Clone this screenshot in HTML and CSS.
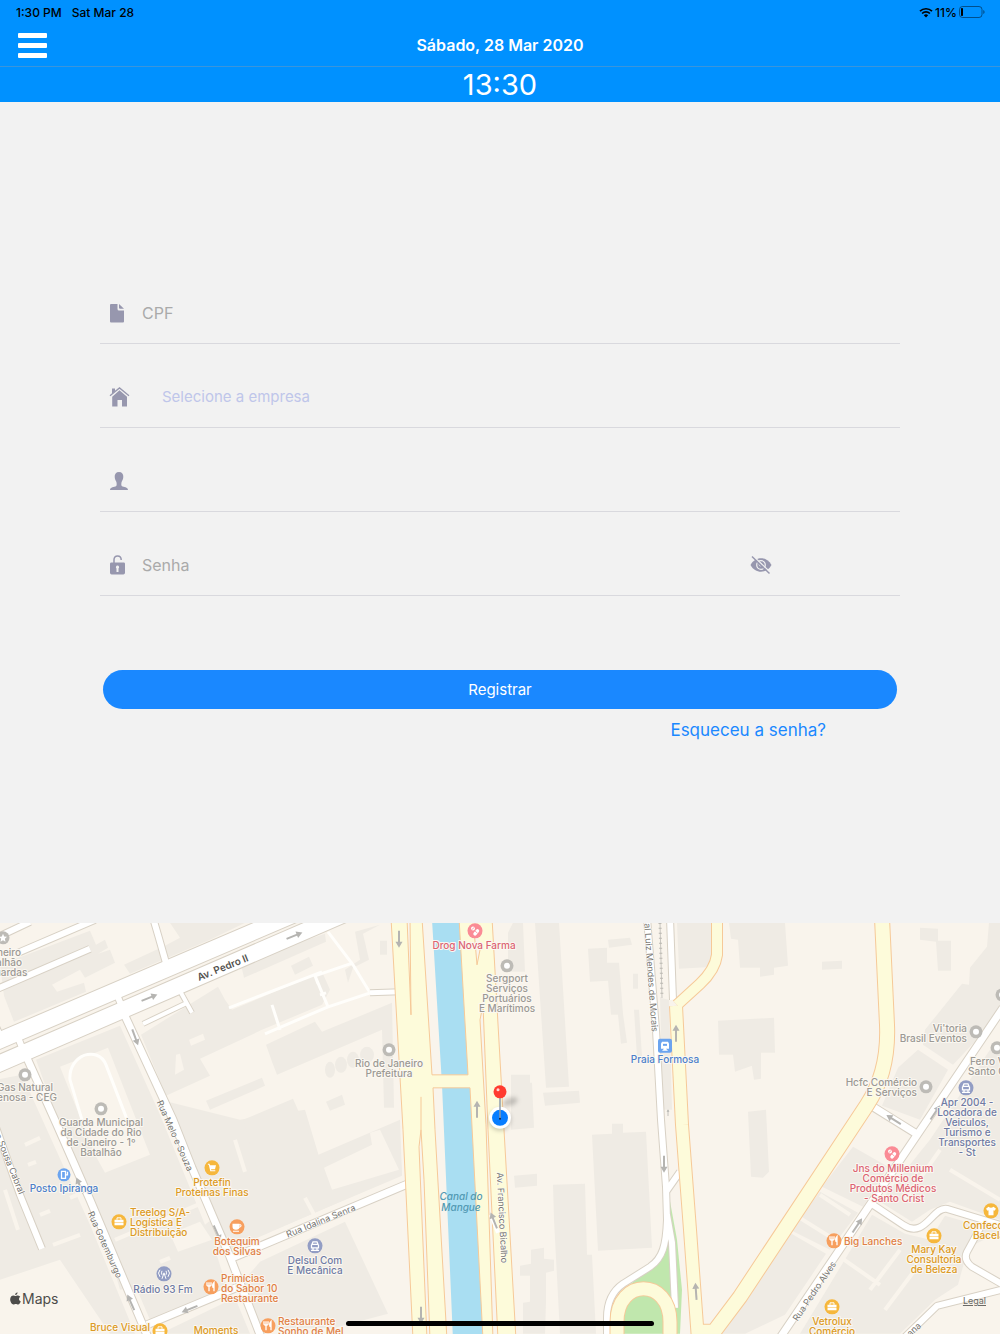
FILE: index.html
```html
<!DOCTYPE html>
<html lang="pt-BR">
  <head>
    <meta charset="UTF-8" />
    <meta name="viewport" content="width=device-width, initial-scale=1.0" />
    <title>Registrar ponto</title>
    <link rel="stylesheet" href="styles.css">
  </head>

  <body>
    <header class="header">
      <div class="status">
        <span>1:30 PM</span>
        <span>Sat Mar 28</span>
        <span class="status-right">
          <svg width="14" height="11" viewBox="0 0 14 11">
            <path d="M1 4.2a8.6 8.6 0 0 1 12 0M3.1 6.5a5.6 5.6 0 0 1 7.8 0" fill="none" stroke="#000" stroke-width="1.7" />
            <path d="M7 10.5 4.8 8.2a3.2 3.2 0 0 1 4.4 0z" />
          </svg>
          <span>11%</span>
          <svg width="26" height="12" viewBox="0 0 26 12">
            <rect x="0.5" y="0.5" width="22.5" height="11" rx="3" fill="none" stroke="#000" stroke-opacity="0.45" />
            <rect x="2" y="2" width="2" height="8" rx="0.8" />
            <path d="M24.3 4v4q1.3-.6 1.3-2t-1.3-2" fill-opacity="0.5" />
          </svg>
        </span>
      </div>
      <div class="nav">
        <button class="menu" aria-label="Menu">
          <span class="menu-bar"></span>
          <span class="menu-bar"></span>
          <span class="menu-bar"></span>
        </button>
        <h1 class="date">Sábado, 28 Mar 2020</h1>
      </div>
      <div class="clock">13:30</div>
    </header>

    <main class="main">
      <form class="form">
        <div class="field">
          <label class="icon" for="cpf" aria-label="CPF">
            <svg width="22" height="22" viewBox="0 0 22 22">
              <path d="M2 2h6.500v5q0 1.500 1.500 1.500h5V19.500q0 1-1 1H2q-1 0-1-1V3q0-1 1-1zM10 2l5 4.800h-4q-1 0-1-1z" />
            </svg>
          </label>
          <input class="input" id="cpf" type="text" placeholder="CPF" />
        </div>
        <div class="field">
          <label class="icon" for="empresa" aria-label="Empresa">
            <svg width="22" height="22" viewBox="0 0 22 22">
              <path d="M3 2.500h3v3L3 8zM10.500 4.200l7.500 6.500V20.500h-5v-6.500H8.500v6.500H3.200v-9.800z" />
              <path d="M1 9.700 10.500 1.900l9.500 7.800" fill="none" stroke="#9797ae" stroke-width="1.300" />
            </svg>
          </label>
          <select class="input select" id="empresa">
            <option>Selecione a empresa</option>
          </select>
        </div>
        <div class="field">
          <label class="icon" for="usuario" aria-label="Usuário">
            <svg width="22" height="22" viewBox="0 0 22 22">
              <path d="M10 2c3 0 4.500 2 4.300 5-.1 2.400-1 3.300-1.500 4.500-.6 1.500-.8 4 .2 4.700 1.500.9 6 .8 6 3.800H1c0-3 4.500-2.900 6-3.800 1-.7.8-3.200.2-4.700C6.700 10.300 5.800 9.400 5.700 7 5.500 4 7 2 10 2z" />
            </svg>
          </label>
          <input class="input" id="usuario" type="text" />
        </div>
        <div class="field">
          <label class="icon" for="senha" aria-label="Senha">
            <svg width="22" height="22" viewBox="0 0 22 22">
              <path d="M5 9V6q0-4 3.600-4t3.600 4" fill="none" stroke="#9797ae" stroke-width="1.500" />
              <path fill-rule="evenodd" d="M2.500 8.500h12.200q1.300 0 1.300 1.300v9q0 1.700-1.700 1.700H2.700Q1 20.500 1 18.800V9.800q0-1.300 1.500-1.300zM8.500 11.500a1.700 1.700 0 0 0-1 3V18h2v-3.500a1.700 1.700 0 0 0-1-3z" />
            </svg>
          </label>
          <input class="input" id="senha" type="password" placeholder="Senha" />
          <button class="eye" type="button" aria-label="Mostrar senha">
            <svg width="22" height="22" viewBox="0 0 22 22">
              <path d="M.5 11C5 2 17 2 21.500 11 17 20 5 20 .5 11z" />
              <circle cx="11" cy="11" r="4.300" fill="none" stroke="#f2f2f2" stroke-width="1.200" />
              <circle cx="10.500" cy="10.500" r="1.400" fill="none" stroke="#f2f2f2" stroke-width="0.800" />
              <path d="M3.200 2 20.500 18.500" stroke="#f2f2f2" stroke-width="1.300" />
              <path d="M2 2.500l17.500 17" stroke="#9797ae" stroke-width="1.400" />
            </svg>
          </button>
        </div>
        <button class="submit" type="button">Registrar</button>
        <a class="forgot" href="#senha">Esqueceu a senha?</a>
      </form>
    </main>

    <section class="map" aria-label="Mapa">
      <svg class="map-canvas" viewBox="0 923 1000 411" preserveAspectRatio="xMidYMid slice">
        <defs>
          <g id="streets">
            <path class="w16" d="M-20 1049 300 912M-20 1072 345 914" />
            <path class="w6" d="M-5 990 90 949M-8 940 30 922M18 953 95 920M153 918 158 935 166 963M115 990 124 1012M17 1035 26 1058M-5 1025 2 1040" />
            <path class="w7" d="M124 1014 173 1120 192 1168 230 1257 262 1340M26 1056 57 1125 90 1200 149 1340M230 1259 408 1184M147 1325 236 1288" />
            <path class="w6" d="M-12 1105 20 1195 42 1249" />
            <path class="w4" d="M143 1024 187 1003M181 993 192 1013" />
            <path class="w5" d="M370 993 400 992" />
            <path class="w6" d="M670 918 673 1000M647 918 656 1030 661 1120 666 1187 667 1220C666 1245 663 1258 650 1267L623 1284Q607 1295 607 1318V1340M667 1215 672 1243 675 1308M666 1192 680 1172" />
            <path class="w7" d="M780 1338 1003 1008M873 1107 918 1135" />
            <path class="w6" d="M873 1205 903 1225C925 1240 933 1206 947 1209L1003 1226M984 1221 967 1252Q963 1260 972 1267L1005 1286M1005 1289 937 1306 902 1340" />
          </g>
          <g id="highways">
            <path class="w10" d="M717 918 717 955Q715 970 700 984L677 1005" />
            <path class="w12" d="M676 1006 682 1125 690 1230 698 1340" />
            <path class="w14" d="M882 918 887 1025Q889 1072 867 1105L740 1297 704 1345M698 1332H714" />
            <path class="w13" d="M617 1340V1322C617 1278 670 1278 670 1322V1340" />
          </g>
          <g id="dot">
            <circle r="6.500" fill="#bdbbb6" />
            <circle r="3" fill="#fff" />
          </g>
          <g id="bag">
            <circle r="7.500" fill="#f6b73c" />
            <path fill="#fff" d="M-4.500-2h9v2.500h-9zM-4.500 1h9v2.500h-9z" />
            <path fill="none" stroke="#fff" d="M-2-2v-2h4v2" />
          </g>
          <g id="food">
            <circle r="7.500" fill="#f79f5e" />
            <path fill="none" stroke="#fff" stroke-width="1.300" d="M-2 4.500v-9M-4-4.500v3q2 2 4 0v-3M3 4.500v-9q-2 2-1 5h1" />
          </g>
          <g id="pill">
            <circle r="7.500" fill="#fa8b95" />
            <path stroke="#fff" stroke-width="3.400" stroke-linecap="round" d="M0 3 2.500 0" />
            <circle cx="-2" cy="-2.300" r="2" fill="#fff" />
            <path stroke="#fa8b95" stroke-width="0.800" d="M-3.500-1-.5-3.600M0 0l2.500 2.500" />
          </g>
          <g id="car">
            <circle r="7.500" fill="#929dc4" />
            <path fill="none" stroke="#fff" stroke-width="1.300" d="M-3-1.500-2-4h4l1 2.500zM-3.500-1v3h7v-3M-2 2v2.500M2 2v2.500M-4 4.500h8" />
          </g>
          <g id="arrow">
            <path fill="none" stroke="#b5b4b1" stroke-width="2" d="M0 8V-6" />
            <path fill="#b5b4b1" d="M-3.500-3 0-9 3.500-3z" />
          </g>
        </defs>

        <rect y="900" width="1000" height="460" fill="#f9f4ec" />

        <!-- Buildings -->
        <g fill="#efebe4">
          <path d="M0 965 90 931 96 945 105 940 108 948 98 954 110 950 115 963 85 978 80 970 52 985 57 992 84 983 86 992 14 1022 4 996z" />
          <path d="M124 965 165 946 180 938 170 923H245L210 940 130 974zM241 965 253 958 325 934 326 942 244 978zM291 966l18-9 4 9-18 9z" />
          <path d="M197 1000 218 987 225 1000 232 1010 322 972 330 990 322 1005 262 1030 200 1059 210 1076 166 1096 141 1035z" />
          <path d="M36 1060 120 1026 160 1115 205 1225 260 1180 400 1120 402 1175 230 1250 180 1270 165 1285 120 1290 100 1220 65 1140z" />
          <path d="M160 1100 240 1120 305 1110 320 1160 400 1150 402 1176 232 1248 200 1180z" />
          <path d="M266 1045 315 1022 322 1032 392 1003 394 1108 384 1108 382 1030 277 1075 272 1062zM206 1101 262 1078 265 1086 210 1110zM243 1120 293 1099 320 1160 260 1180zM-5 1080 22 1075 90 1225 135 1334H110L60 1260 0 1280zM326 1102l16-7 3 10-15 6z" />
          <path d="M355 932 380 925 363 934 369 960 353 968 348 983 345 970 360 960zM380 941h7v14h-7z" />
          <path d="M260 1262 345 1222 388 1314 335 1328 260 1330 240 1285z" />
          <path d="M120 1250 175 1222 215 1250 228 1290 150 1320zM160 1334 235 1298 250 1334z" />
          <path d="M508 933 513 923H523L525 972H508zM535 923H559L569 1087 546 1088zM543 1093 579 1091 580 1103 545 1106zM511 1075H530V1083L532 1083 534 1128 511 1130zM588 949 607 948V963L619 963 623 1014 627 1043 621 1044 618 1015H611L608 981 590 982zM608 940 630 938 632 945 609 948zM633 974h5v15h-5zM634 1010h5l3 47h-5z" />
          <path d="M592 1135 612 1134 612 1124H623V1133L646 1132 652 1248 598 1251zM553 1185 585 1184 587 1255H592L596 1334H560L554 1220zM514 1176 537 1174V1186L515 1188zM531 1250 544 1248V1259L554 1260V1271L546 1273V1302L545 1334H523V1303L530 1302V1276L520 1276V1266L531 1264z" />
          <path d="M677 923H713L715 967 679 969zM660 998 669 1000 672 1110 663 1110zM729 923H785L788 966 774 968V975L760 977V968H740L738 940 731 939zM718 1021 774 1018 775 1053H761L761 1079 754 1080 750 1054H750L752 1066 735 1072 733 1055H719zM822 962 842 961V969L822 970zM748 1112 766 1110 769 1172 763 1178 751 1177z" />
          <path d="M920 928 938 929V941H951V971H938L936 942 920 940zM989 923H1000V1015L953 1065 923 1045 925 1030 962 984 969 985 970 968 987 947zM898 1068 918 1050 948 1070 920 1120 882 1106z" />
          <path d="M853 1147 888 1167 863 1207 822 1187zM820 1192 858 1213 830 1250 790 1230zM788 1232 826 1254 785 1315 745 1334H717z" />
          <path d="M872 1215 905 1234 930 1240 945 1216 1000 1232 968 1248 958 1285 935 1300 900 1334H800zM930 1140 990 1050 1000 1045V1220L950 1202 930 1210 912 1222 880 1202z" />
        </g>
        <g fill="#efebe4">
          <ellipse cx="330" cy="1070" rx="5" ry="8" /><ellipse cx="341" cy="1065" rx="6" ry="8" /><ellipse cx="353" cy="1060" rx="6" ry="8" /><ellipse cx="367" cy="1055" rx="7" ry="8" />
        </g>
        <path class="yard" d="M60 1067 108 1048 150 1155 105 1173 95 1155zM324 1168 372 1145 370 1133 380 1130 399 1170 332 1190zM170 1234 200 1222 212 1240 178 1252zM189 1040 203 1034 205 1040 191 1046zM176 1055 180 1054 184 1070 175 1075z" />
        <path class="lane" d="M25 1145 40 1138M28 1165l8-3M5 1190 18 1230M40 1215l10-4M53 1245 80 1235M305 1198 318 1222M115 1240 200 1204M235 1140l10 32M70 1198l12-5M160 1262l10-4M950 1170 1000 1200M905 1200 940 1150M830 1250 880 1285M870 1290 900 1250M885 1310 915 1270M850 1215 820 1195M835 1240 795 1215M922 1048 955 1070" />
        <path class="path" d="M82 1120 70 1080C68 1055 98 1045 106 1065L128 1122M328 932 353 965 370 993 328 1007 315 976 353 963M229 1008 322 972M265 1034 328 1007M272 1005 280 1030M315 976l3 8M320 995l6-2" />

        <!-- Park -->
        <path fill="#c0e7ad" d="M669 1196 677 1240 682 1290 680 1334H618V1295L650 1268 664 1255z" />

        <!-- Canal -->
        <path fill="#a9def2" d="M432 920H460L470 1090 484 1340H453L442 1085z" />

        <use href="#streets" class="street-edge" />
        <use href="#streets" class="street-fill" />
        <use href="#highways" class="highway-edge" />
        <use href="#highways" class="highway-fill" />

        <!-- Avenida Francisco Bicalho -->
        <path class="highway" d="M391 918H422L432 1075H468L459 918H492L504 1130 516 1340H483L470 1088H433L435 1130 447 1340H413L403 1130z" />
        <path class="median" d="M407 918 411 1015 410 918M421 1097 421 1130 419 1147 427 1340H430L424 1180 421 1130M474 930 477 965 481 945M483 1005 480 1020 486 1125 493 1340H498L488 1130z" />
        <path stroke="#fff" stroke-width="4" d="M491 1215 498 1233" />

        <path fill="none" stroke="#c9c6c0" d="M660 923 662 998" />
        <path fill="none" stroke="#b9b6b0" stroke-width="3" stroke-dasharray="1 4" d="M660 923 662 998" />

        <!-- One way arrows -->
        <g>
          <use href="#arrow" transform="translate(149 998) rotate(68)" />
          <use href="#arrow" transform="translate(294 936) rotate(68)" />
          <use href="#arrow" transform="translate(135 1037) rotate(160)" />
          <use href="#arrow" transform="translate(399 939) rotate(180)" />
          <use href="#arrow" transform="translate(477 1110)" />
          <use href="#arrow" transform="translate(494 1221) rotate(-22)" />
          <use href="#arrow" transform="translate(676 1034)" />
          <use href="#arrow" transform="translate(664 1164) rotate(180)" />
          <use href="#arrow" transform="translate(696 1292) rotate(-4)" />
          <use href="#arrow" transform="translate(421 1315) rotate(180)" />
          <use href="#arrow" transform="translate(80 1186) rotate(-24)" />
          <use href="#arrow" transform="translate(131 1303) rotate(-24)" />
          <use href="#arrow" transform="translate(217 1233) rotate(156)" />
          <use href="#arrow" transform="translate(190 1309) rotate(-112)" />
          <use href="#arrow" transform="translate(857 1226) rotate(34)" />
          <use href="#arrow" transform="translate(935 1113) rotate(34)" />
          <use href="#arrow" transform="translate(894 1120) rotate(-58)" />
          <use href="#arrow" transform="translate(668 1113) scale(.4)" />
        </g>

        <!-- Street names -->
        <g class="street-name">
          <text class="avenue" transform="translate(224 971) rotate(-22)">Av. Pedro II</text>
          <text transform="translate(172 1137) rotate(66)">Rua Melo e Souza</text>
          <text transform="translate(102 1246) rotate(66)">Rua Gotemburgo</text>
          <text transform="translate(5 1160) rotate(68)">Rua Sousa Cabral</text>
          <text transform="translate(322 1224) rotate(-22)">Rua Idalina Senra</text>
          <text transform="translate(499 1218) rotate(87)">Av. Francisco Bicalho</text>
          <text transform="translate(648 978) rotate(86)">al Luiz Mendes de Morais</text>
          <text transform="translate(817 1293) rotate(-56)">Rua Pedro Alves</text>
          <text transform="translate(916 1332) rotate(-42)">ana</text>
        </g>

        <!-- Places -->
        <g class="place gray">
          <circle cx="3" cy="938" r="6.500" fill="#bdbbb6" />
          <path fill="#fff" d="M3 934l1.200 2.700 2.800.3-2.100 1.900.6 2.900L3 940.300.5 941.800l.6-2.900L-1 937l2.800-.3z" />
          <text x="9" y="956">neiro<tspan x="9" dy="10">alhão</tspan><tspan x="11" dy="10">uardas</tspan></text>
          <use href="#dot" x="25" y="1075" />
          <text x="25" y="1091">Gas Natural<tspan x="27" dy="10">enosa - CEG</tspan></text>
          <use href="#dot" x="101" y="1109" />
          <text x="101" y="1126">Guarda Municipal<tspan x="101" dy="10">da Cidade do Rio</tspan><tspan x="101" dy="10">de Janeiro - 1º</tspan><tspan x="101" dy="10">Batalhão</tspan></text>
          <use href="#dot" x="389" y="1050" />
          <text x="389" y="1067">Rio de Janeiro<tspan x="389" dy="10">Prefeitura</tspan></text>
          <use href="#dot" x="507" y="966" />
          <text x="507" y="982">Sergport<tspan x="507" dy="10">Serviços</tspan><tspan x="507" dy="10">Portuários</tspan><tspan x="507" dy="10">E Marítimos</tspan></text>
          <use href="#dot" x="976" y="1032" />
          <text class="end" x="967" y="1032">Vi'toria<tspan x="967" dy="10">Brasil Eventos</tspan></text>
          <use href="#dot" x="926" y="1087" />
          <text class="end" x="917" y="1086">Hcfc Comércio<tspan x="917" dy="10">E Serviços</tspan></text>
          <use href="#dot" x="997" y="1048" />
          <use href="#dot" x="1002" y="995" />
          <text class="start" x="970" y="1065">Ferro V<tspan x="968" dy="10">Santo C</tspan></text>
        </g>
        <g class="place red">
          <use href="#pill" x="475" y="931" />
          <text x="474" y="949">Drog Nova Farma</text>
          <use href="#pill" x="892" y="1154" />
          <text x="893" y="1172">Jns do Millenium<tspan x="893" dy="10">Comércio de</tspan><tspan x="893" dy="10">Produtos Médicos</tspan><tspan x="894" dy="10">- Santo Crist</tspan></text>
        </g>
        <g class="place blue">
          <rect x="658" y="1039" width="14" height="14" rx="2" fill="#6ba4ef" />
          <path fill="#fff" d="M662 1042h6l1 2v5h-8v-5zM662 1051l2-2h2l2 2z" />
          <path fill="#6ba4ef" d="M663 1044h4v2h-4z" />
          <text x="665" y="1063">Praia Formosa</text>
          <circle cx="64" cy="1175" r="6.500" fill="#6ba4ef" />
          <path fill="none" stroke="#fff" stroke-width="1.300" d="M61.500 1178.500v-7h4v7zM65.500 1175h2v-3" />
          <text x="64" y="1192">Posto Ipiranga</text>
        </g>
        <g class="place navy">
          <use href="#car" x="315" y="1246" />
          <text x="315" y="1264">Delsul Com<tspan x="315" dy="10">E Mecânica</tspan></text>
          <use href="#car" x="966" y="1088" />
          <text x="967" y="1106">Apr 2004 -<tspan x="967" dy="10">Locadora de</tspan><tspan x="967" dy="10">Veiculos,</tspan><tspan x="967" dy="10">Turismo e</tspan><tspan x="967" dy="10">Transportes</tspan><tspan x="967" dy="10">- St</tspan></text>
          <circle cx="164" cy="1274" r="7.500" fill="#929dc4" />
          <path fill="none" stroke="#fff" d="M162 1279l2-6 2 6M160 1277q-3-4 0-7M168 1277q3-4 0-7M162 1275q-1-2 0-4M166 1275q1-2 0-4" />
          <text x="163" y="1293">Rádio 93 Fm</text>
        </g>
        <g class="place yellow">
          <circle cx="212" cy="1168" r="7.500" fill="#f6b73c" />
          <path fill="#fff" d="M208 1164h1.500l.5 1.500h6l-1 4h-4l.3 1h4v1h-5l-1.500-6.500h-1z" />
          <text x="212" y="1186">Protefin<tspan x="212" dy="10">Proteinas Finas</tspan></text>
          <use href="#bag" x="119" y="1222" />
          <text class="start" x="130" y="1216">Treelog S/A-<tspan x="130" dy="10">Logística E</tspan><tspan x="130" dy="10">Distribuição</tspan></text>
          <use href="#bag" x="934" y="1236" />
          <text x="934" y="1253">Mary Kay<tspan x="934" dy="10">Consultoria</tspan><tspan x="934" dy="10">de Beleza</tspan></text>
          <use href="#bag" x="832" y="1307" />
          <text x="832" y="1325">Vetrolux<tspan x="832" dy="10">Comércio</tspan></text>
          <circle cx="991" cy="1211" r="7.500" fill="#f6b73c" />
          <path fill="#fff" d="M988.500 1207q2.500 2 5 0l2.500 2-1.500 2-1-.5v5h-5v-5l-1 .5-1.500-2z" />
          <text class="start" x="963" y="1229">Confecç<tspan x="973" dy="10">Bacela</tspan></text>
          <use href="#bag" x="160" y="1331" />
          <text class="end" x="150" y="1331">Bruce Visual</text>
          <text x="216" y="1334">Moments</text>
        </g>
        <g class="place orange">
          <circle cx="237" cy="1227" r="7.500" fill="#f79f5e" />
          <path fill="#fff" d="M232.500 1224h7v3q0 3-3.500 3t-3.500-3zM233 1231h6v1h-6z" />
          <path fill="none" stroke="#fff" d="M239 1225h2q1 2-2 2.500" />
          <text x="237" y="1245">Botequim<tspan x="237" dy="10">dos Silvas</tspan></text>
          <use href="#food" x="211" y="1287" />
          <text class="start" x="221" y="1282">Primícias<tspan x="221" dy="10">do Sabor 10</tspan><tspan x="221" dy="10">Restaurante</tspan></text>
          <use href="#food" x="268" y="1326" />
          <text class="start" x="278" y="1325">Restaurante<tspan x="278" dy="10">Sonho de Mel</tspan></text>
          <use href="#food" x="834" y="1241" />
          <text class="start" x="844" y="1245">Big Lanches</text>
        </g>
        <text class="water" x="461" y="1200">Canal do<tspan x="461" dy="11">Mangue</tspan></text>

        <!-- Current position -->
        <ellipse class="shadow" cx="510" cy="1102" rx="8" ry="4" transform="rotate(-20 510 1102)" />
        <circle class="shadow" cx="500" cy="1120" r="11" />
        <circle cx="500" cy="1118" r="11" fill="#fff" />
        <circle cx="500" cy="1118" r="8" fill="#087dff" />
        <path d="M500 1097v22" stroke="#8e9bab" stroke-width="1.500" />
        <circle cx="500" cy="1119" r="1" fill="#124" />
        <circle cx="500" cy="1092" r="6.500" fill="#ff3b30" />
        <circle cx="498" cy="1090" r="1.500" fill="#fff" fill-opacity="0.8" />
      </svg>

      <div class="brand">
        <svg width="11" height="13" viewBox="0 0 11 13">
          <path fill="#4d4c4a" d="M7.500.2c.2 1.500-1 2.900-2.300 2.800C5 1.700 6.100.5 7.500.200zM5.300 4c.8 0 1.500-.6 2.700-.5 1 .1 1.800.5 2.300 1.300-2 1.400-1.500 3.900.5 4.700-.6 1.500-1.500 3-2.700 3-.9 0-1.200-.5-2.300-.5s-1.500.5-2.300.500C1.800 12.500 0 9.500.2 7 .4 4.500 2 3.500 3.300 3.500c.9 0 1.500.5 2 .5z" />
        </svg>
        <span>Maps</span>
      </div>
      <a class="legal" href="#legal">Legal</a>
      <div class="home-bar"></div>
    </section>
  </body>
</html>
```
FILE: styles.css
```css
* {
  box-sizing: border-box;
}

body {
  margin: 0;
  min-height: 100vh;
  display: flex;
  flex-direction: column;
  background-color: #f2f2f2;
  font-family: Inter, "Liberation Sans", sans-serif;
}

button,
input,
select {
  font-family: inherit;
  border: none;
  background: none;
  padding: 0;
  margin: 0;
}

/* Header */
.header {
  background-color: #0091ff;
  color: #fff;
}

.status {
  display: flex;
  align-items: center;
  gap: 10px;
  height: 24px;
  padding: 0 15px 0 16px;
  color: #000;
  font-size: 12px;
  font-weight: 500;
}

.status-right {
  display: flex;
  align-items: center;
  gap: 2px;
  margin-left: auto;
}

.nav {
  display: grid;
  grid-template-columns: 1fr auto 1fr;
  align-items: center;
  height: 43px;
  padding: 0 18px;
  border-bottom: 1px solid #3a95dc;
}

.menu {
  display: flex;
  flex-direction: column;
  gap: 5px;
  width: 29px;
}

.menu-bar {
  height: 5px;
  border-radius: 1px;
  background-color: #fff;
}

.date {
  margin: 0;
  font-size: 16px;
  font-weight: 600;
}

.clock {
  height: 35px;
  line-height: 35px;
  text-align: center;
  font-size: 29px;
}

/* Form */
.main {
  flex: 2 0 0px;
  display: flex;
  flex-direction: column;
  align-items: center;
  justify-content: center;
}

.form {
  display: flex;
  flex-direction: column;
  width: 80%;
  padding-bottom: 14px;
}

.field {
  display: flex;
  align-items: center;
  height: 84px;
  padding: 22px 16% 0 9px;
  border-bottom: 1px solid #d9d9de;
}

.icon {
  display: flex;
  fill: #9797ae;
}

.input {
  flex: 1;
  height: 40px;
  padding-left: 11px;
  font-size: 16px;
  color: #555;
  outline: none;
}

.input::placeholder {
  color: #aaa;
  opacity: 1;
}

.select {
  appearance: none;
  padding-left: 31px;
  font-size: 15px;
  color: #bfc6ea;
}

.eye {
  display: flex;
  fill: #9797ae;
}

.submit {
  height: 39px;
  margin: 74px 3px 0;
  border-radius: 20px;
  background-color: #1a88ff;
  color: #fff;
  font-size: 15px;
}

.forgot {
  align-self: flex-end;
  margin-right: 74px;
  line-height: 42px;
  font-size: 17px;
  color: #1a88ff;
  text-decoration: none;
}

/* Map */
.map {
  position: relative;
  flex: 1 0 0px;
  min-height: 0;
  display: flex;
  overflow: hidden;
  background-color: #f9f4ec;
}

.map-canvas {
  flex: 1;
  width: 100%;
}

/* road width comes from the w classes, --edge adds the border */
#streets path,
#highways path {
  stroke-width: calc(var(--w) + var(--edge));
  stroke-linejoin: round;
}

.w4 { --w: 4px; }
.w5 { --w: 5px; }
.w6 { --w: 6px; }
.w7 { --w: 7px; }
.w10 { --w: 10px; }
.w12 { --w: 12px; }
.w13 { --w: 13px; }
.w14 { --w: 14px; }
.w16 { --w: 16px; }

.street-edge {
  --edge: 2px;
  fill: none;
  stroke: #d8d1c5;
}

.street-fill {
  --edge: 0px;
  fill: none;
  stroke: #fff;
}

.highway-edge {
  --edge: 2px;
  fill: none;
  stroke: #f6c998;
}

.highway-fill {
  --edge: 0px;
  fill: none;
  stroke: #fdfbda;
}

.highway {
  fill: #fdfbda;
  stroke: #f6c998;
}

.median {
  fill: #f9f4ec;
  stroke: #f6c998;
}

.yard {
  fill: #f9f4ec;
}

.lane {
  fill: none;
  stroke: #f9f4ec;
  stroke-width: 4px;
}

.path {
  fill: none;
  stroke: #fffefb;
  stroke-width: 3px;
}

.street-name {
  font-size: 9px;
  fill: #77756f;
  stroke: #fff;
  stroke-width: 1px;
  paint-order: stroke;
  text-anchor: middle;
}

.avenue {
  font-size: 10px;
  font-weight: 600;
  fill: #55534f;
}

.place text {
  font-size: 10px;
  font-weight: 500;
  text-anchor: middle;
  stroke: #fbf8f2;
  stroke-width: 2px;
  stroke-linejoin: round;
  paint-order: stroke;
}

.place .start {
  text-anchor: start;
}

.place .end {
  text-anchor: end;
}

.gray text {
  fill: #9b9994;
}

.red text {
  fill: #dc6472;
}

.blue text {
  fill: #4d7fc9;
}

.navy text {
  fill: #6f7ba5;
}

.yellow text {
  fill: #dc9a24;
}

.orange text {
  fill: #e07f45;
}

.water {
  font-size: 10px;
  font-style: italic;
  font-weight: 500;
  text-anchor: middle;
  fill: #5299b3;
}

.shadow {
  fill: #000;
  fill-opacity: 0.2;
  filter: blur(2px);
}

.brand {
  position: absolute;
  left: 10px;
  bottom: 27px;
  display: flex;
  align-items: center;
  gap: 1px;
  color: #4d4c4a;
  font-size: 14px;
}

.legal {
  position: absolute;
  right: 14px;
  bottom: 28px;
  font-size: 9px;
  color: #6b6a66;
}

.home-bar {
  position: absolute;
  left: 50%;
  bottom: 8px;
  width: 308px;
  height: 5px;
  margin-left: -154px;
  border-radius: 3px;
  background-color: #000;
}
```
